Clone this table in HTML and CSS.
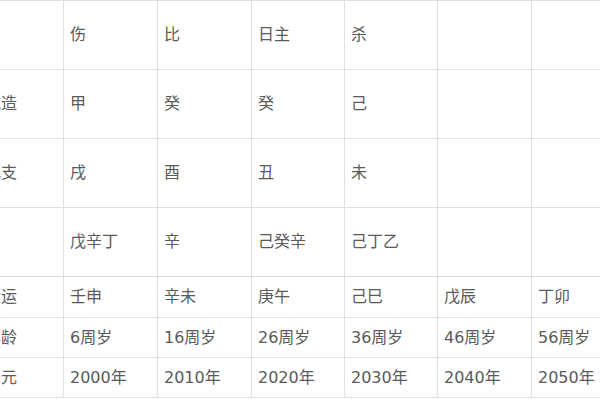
FILE: index.html
```html
<!DOCTYPE html>
<html lang="zh-CN">
<head>
<meta charset="utf-8">
<link rel="stylesheet" href="styles.css">
</head>
<body>
<div class="bazi">
  <div class="cell tall"></div><div class="cell tall">伤</div><div class="cell tall">比</div><div class="cell tall">日主</div><div class="cell tall">杀</div><div class="cell tall"></div><div class="cell tall"></div>
  <div class="cell tall">乾造</div><div class="cell tall">甲</div><div class="cell tall">癸</div><div class="cell tall">癸</div><div class="cell tall">己</div><div class="cell tall"></div><div class="cell tall"></div>
  <div class="cell tall">地支</div><div class="cell tall">戌</div><div class="cell tall">酉</div><div class="cell tall">丑</div><div class="cell tall">未</div><div class="cell tall"></div><div class="cell tall"></div>
  <div class="cell tall"></div><div class="cell tall">戊辛丁</div><div class="cell tall">辛</div><div class="cell tall">己癸辛</div><div class="cell tall">己丁乙</div><div class="cell tall"></div><div class="cell tall"></div>
  <div class="cell">大运</div><div class="cell">壬申</div><div class="cell">辛未</div><div class="cell">庚午</div><div class="cell">己巳</div><div class="cell">戊辰</div><div class="cell">丁卯</div>
  <div class="cell">年龄</div><div class="cell">6周岁</div><div class="cell">16周岁</div><div class="cell">26周岁</div><div class="cell">36周岁</div><div class="cell">46周岁</div><div class="cell">56周岁</div>
  <div class="cell">公元</div><div class="cell">2000年</div><div class="cell">2010年</div><div class="cell">2020年</div><div class="cell">2030年</div><div class="cell">2040年</div><div class="cell">2050年</div>
</div>
</body>
</html>
```
FILE: styles.css
```css
html, body {
  margin: 0;
  padding: 0;
  background: #fff;
  overflow: hidden;
}
body {
  width: 600px;
  height: 400px;
  font-family: "DejaVu Sans", "Noto Sans CJK SC", sans-serif;
  font-size: 16px;
  color: #5a5a5a;
}
.bazi {
  display: grid;
  grid-template-columns: 85px 94px 94px 93px 93px 94px 94px;
  grid-template-rows: 69px 69px 69px 69px 41px 40px 40px;
  width: max-content;
  margin-left: -22px;
  border-top: 1px solid #e0e0e0;
  border-left: 1px solid #e0e0e0;
}
.cell {
  box-sizing: border-box;
  display: flex;
  align-items: center;
  padding-left: 6px;
  border-right: 1px solid #e0e0e0;
  border-bottom: 1px solid #e0e0e0;
  white-space: nowrap;
  line-height: 20px;
}
```
